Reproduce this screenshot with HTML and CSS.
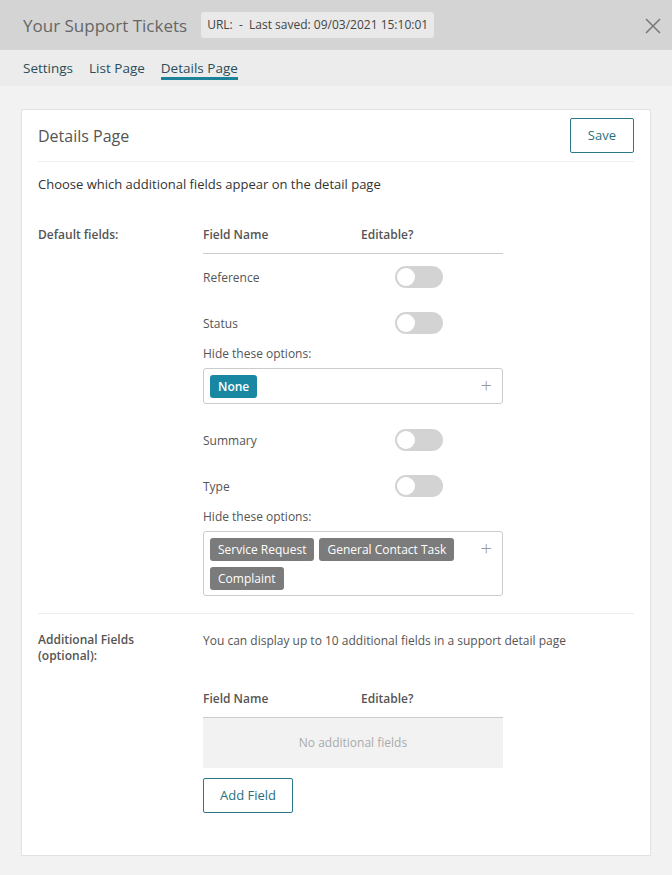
FILE: index.html
```html
<!DOCTYPE html>
<html lang="en">
<head>
  <meta charset="UTF-8">
  <title>Your Support Tickets</title>
  <link rel="stylesheet" href="styles.css">
</head>
<body>

  <div class="top-bar">
    <div class="title">Your Support Tickets</div>
    <div class="url-badge">URL: &nbsp;- &nbsp;Last saved: 09/03/2021 15:10:01</div>
    <div class="close-button">
      <svg width="16" height="16" viewBox="0 0 16 16"><path d="M1 1L15 15M15 1L1 15" stroke="#7a7a7a" stroke-width="1.6" fill="none"/></svg>
    </div>
  </div>

  <div class="tabs">
    <div class="tab">Settings</div>
    <div class="tab">List Page</div>
    <div class="tab active">Details Page</div>
  </div>

  <div class="content">
    <div class="card">
      <div class="card-header">
        <div class="card-title">Details Page</div>
        <div class="btn">Save</div>
      </div>

      <div class="intro">Choose which additional fields appear on the detail page</div>

      <div class="section default-section">
        <div class="section-label">Default fields:</div>
        <div class="section-body">
          <div class="table-head">
            <div class="col-name">Field Name</div>
            <div class="col-edit">Editable?</div>
          </div>

          <div class="field-row">
            <div class="col-name">Reference</div>
            <div class="col-edit"><div class="toggle"></div></div>
          </div>

          <div class="field-row">
            <div class="col-name">Status</div>
            <div class="col-edit"><div class="toggle"></div></div>
          </div>
          <div class="hide-label">Hide these options:</div>
          <div class="tag-box">
            <div class="tags">
              <span class="tag blue">None</span>
            </div>
            <span class="plus">+</span>
          </div>

          <div class="field-row">
            <div class="col-name">Summary</div>
            <div class="col-edit"><div class="toggle"></div></div>
          </div>

          <div class="field-row">
            <div class="col-name">Type</div>
            <div class="col-edit"><div class="toggle"></div></div>
          </div>
          <div class="hide-label">Hide these options:</div>
          <div class="tag-box last">
            <div class="tags">
              <span class="tag grey">Service Request</span>
              <span class="tag grey">General Contact Task</span>
              <span class="tag grey">Complaint</span>
            </div>
            <span class="plus">+</span>
          </div>
        </div>
      </div>

      <div class="section additional-section">
        <div class="section-label">Additional Fields<br>(optional):</div>
        <div class="section-body">
          <div class="hint">You can display up to 10 additional fields in a support detail page</div>
          <div class="table-head">
            <div class="col-name">Field Name</div>
            <div class="col-edit">Editable?</div>
          </div>
          <div class="empty-row">No additional fields</div>
          <div class="btn add-btn">Add Field</div>
        </div>
      </div>
    </div>
  </div>

</body>
</html>
```

FILE: styles.css
```css
    body {
      margin: 0;
      background: #f2f2f2;
      font-family: 'Open Sans', sans-serif;
      color: #444;
      font-size: 12px;
    }

    .top-bar {
      height: 50px;
      background: #d4d4d4;
      display: flex;
      align-items: center;
      padding: 0 11px 0 23px;
    }

    .title {
      font-size: 17px;
      color: #666;
      margin-right: 14px;
    }

    .url-badge {
      background: #e9e9e9;
      border-radius: 3px;
      padding: 0 6px;
      height: 26px;
      line-height: 26px;
      font-size: 12px;
      color: #444;
    }

    .close-button {
      margin-left: auto;
      width: 16px;
      height: 16px;
      margin-top: 2px;
    }

    .tabs {
      height: 36px;
      background: #ececec;
      display: flex;
      gap: 16px;
      padding: 0 23px;
    }

    .tab {
      font-size: 13.5px;
      color: #2b4c59;
      padding-top: 9px;
      height: 18px;
    }

    .tab.active {
      border-bottom: 3px solid #1b8299;
    }

    .content {
      padding: 23px 21px 19px 21px;
    }

    .card {
      background: #fff;
      border: 1px solid #e2e2e2;
      padding: 0 16px 42px 16px;
    }

    .card-header {
      display: flex;
      justify-content: space-between;
      align-items: center;
      padding: 8px 0 8px 0;
      border-bottom: 1px solid #eee;
    }

    .card-title {
      font-size: 16px;
      color: #555;
    }

    .btn {
      border: 1px solid #2a7787;
      border-radius: 2px;
      color: #2a6f80;
      font-size: 13px;
      height: 33px;
      line-height: 33px;
      padding: 0 17px;
      display: inline-block;
    }

    .intro {
      font-size: 13px;
      color: #333;
      line-height: 18px;
      padding-top: 13px;
    }

    .section {
      display: flex;
    }

    .section-label {
      width: 165px;
      flex-shrink: 0;
      font-size: 12px;
      font-weight: 600;
      color: #555;
      line-height: 16px;
    }

    .section-body {
      width: 300px;
    }

    .default-section {
      padding-top: 33px;
      padding-bottom: 17px;
      border-bottom: 1px solid #eee;
    }

    .default-section .section-label {
      padding-top: 1px;
    }

    .table-head {
      display: flex;
      font-size: 12px;
      font-weight: 600;
      color: #555;
      line-height: 18px;
      padding-bottom: 9px;
      border-bottom: 1px solid #ccc;
    }

    .col-name {
      width: 158px;
    }

    .col-edit {
      flex: 1;
    }

    .field-row {
      display: flex;
      align-items: center;
      height: 46px;
      font-size: 12px;
      color: #555;
    }

    .field-row .col-edit {
      padding-left: 34px;
    }

    .toggle {
      width: 48px;
      height: 22px;
      border-radius: 11px;
      background: #d3d3d3;
      position: relative;
    }

    .toggle::after {
      content: "";
      position: absolute;
      left: 2px;
      top: 2px;
      width: 18px;
      height: 18px;
      border-radius: 50%;
      background: #fff;
    }

    .hide-label {
      font-size: 12px;
      color: #555;
      line-height: 16px;
      margin-bottom: 6px;
    }

    .tag-box {
      border: 1px solid #ccc;
      border-radius: 3px;
      padding: 6px 10px 5px 6px;
      display: flex;
      align-items: flex-start;
      margin-bottom: 13px;
      min-height: 22px;
    }

    .tag-box.last {
      margin-bottom: 0;
    }

    .tags {
      flex: 1;
      display: flex;
      flex-wrap: wrap;
      gap: 6px 5px;
    }

    .tag {
      display: inline-block;
      height: 23px;
      line-height: 23px;
      padding: 0 8px;
      border-radius: 3px;
      color: #fff;
      font-size: 12px;
      font-weight: 600;
    }

    .tag.blue {
      background: #1987a1;
    }

    .tag.grey {
      background: #7b7b7b;
      font-weight: 400;
    }

    .plus {
      font-size: 20px;
      font-weight: 300;
      line-height: 22px;
      color: #999;
    }

    .additional-section {
      padding-top: 18px;
    }

    .hint {
      font-size: 12px;
      color: #555;
      line-height: 18px;
      margin-bottom: 40px;
      white-space: nowrap;
    }

    .empty-row {
      height: 50px;
      line-height: 50px;
      text-align: center;
      background: #f2f2f2;
      color: #aaa;
      font-size: 12px;
      margin-bottom: 10px;
    }

    .add-btn {
      padding: 0 16px;
    }
```
